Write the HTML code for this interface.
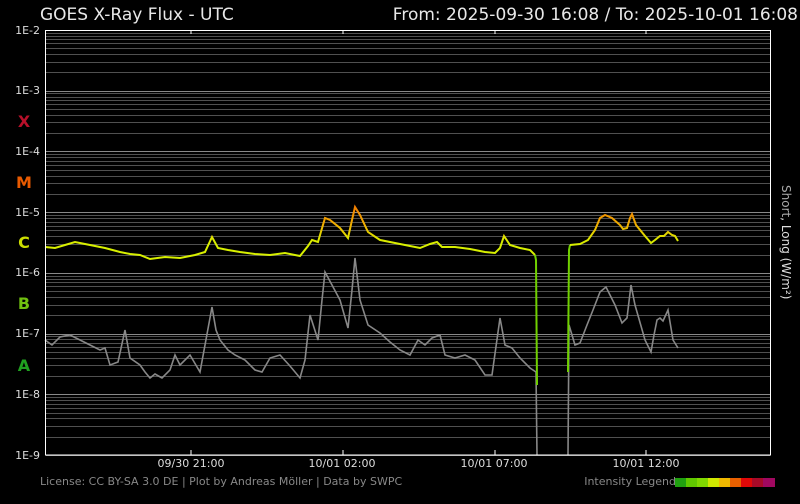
<!DOCTYPE html><html><head><style>body{margin:0;background:#000;width:800px;height:500px;overflow:hidden;font-family:"DejaVu Sans","Liberation Sans",sans-serif}</style></head><body>
<svg width="800" height="500" xmlns="http://www.w3.org/2000/svg">
<defs><linearGradient id="g" gradientUnits="userSpaceOnUse" x1="0" y1="205" x2="0" y2="245"><stop offset="0" stop-color="#f07800"/><stop offset="0.5" stop-color="#f0b000"/><stop offset="0.85" stop-color="#dce800"/><stop offset="1" stop-color="#d8f000"/></linearGradient></defs>
<g id="grid" stroke="#555" stroke-width="1"></g>
<text x="40" y="20" fill="#e8e8e8" font-size="17">GOES X-Ray Flux - UTC</text>
<text x="798" y="20" fill="#e8e8e8" font-size="17" text-anchor="end">From: 2025-09-30 16:08  /  To: 2025-10-01 16:08</text>
<g fill="#ddd" font-size="11" text-anchor="end">
<text x="40" y="34">1E-2</text><text x="40" y="94">1E-3</text><text x="40" y="155">1E-4</text><text x="40" y="216">1E-5</text><text x="40" y="276">1E-6</text><text x="40" y="337">1E-7</text><text x="40" y="398">1E-8</text><text x="40" y="459">1E-9</text></g>
<g font-size="16" font-weight="bold" text-anchor="middle">
<text x="24" y="127" fill="#b8102a">X</text><text x="24" y="188" fill="#e85a00">M</text><text x="24" y="248" fill="#ccdd00">C</text><text x="24" y="309" fill="#70c010">B</text><text x="24" y="371" fill="#20a020">A</text></g>
<g fill="#ddd" font-size="11" text-anchor="middle">
<text x="191" y="467">09/30 21:00</text><text x="342" y="467">10/01 02:00</text><text x="494" y="467">10/01 07:00</text><text x="646" y="467">10/01 12:00</text></g>
<g stroke="#fff"><line x1="191" y1="30" x2="191" y2="34"/><line x1="343" y1="30" x2="343" y2="34"/><line x1="495" y1="30" x2="495" y2="34"/><line x1="646" y1="30" x2="646" y2="34"/>
<line x1="191" y1="455" x2="191" y2="450"/><line x1="343" y1="455" x2="343" y2="450"/><line x1="495" y1="455" x2="495" y2="450"/><line x1="646" y1="455" x2="646" y2="450"/></g>
<text transform="translate(782,185) rotate(90)" fill="#aaa" font-size="12">Short<tspan fill="#ddd">, Long (W/m²)</tspan></text>
<text x="40" y="485" fill="#888" font-size="11">License: CC BY-SA 3.0 DE | Plot by Andreas Möller | Data by SWPC</text>
<text x="676" y="485" fill="#888" font-size="11" text-anchor="end">Intensity Legend</text>
<g><rect x="675" y="478" width="11" height="9" fill="#20a010"/><rect x="686" y="478" width="11" height="9" fill="#60c800"/><rect x="697" y="478" width="11" height="9" fill="#80d800"/><rect x="708" y="478" width="11" height="9" fill="#d0e800"/><rect x="719" y="478" width="11" height="9" fill="#f0b800"/><rect x="730" y="478" width="11" height="9" fill="#e86000"/><rect x="741" y="478" width="11" height="9" fill="#e00808"/><rect x="752" y="478" width="11" height="9" fill="#a80a28"/><rect x="763" y="478" width="12" height="9" fill="#a00860"/></g>
<polyline fill="none" stroke="#888" stroke-width="1.6" points="45,340 52,345 60,337 70,335 80,340 90,345 100,350 105,348 110,365 118,362 125,330 130,358 140,365 145,372 150,378 155,374 162,378 170,370 175,355 180,365 190,355 200,372 205,345 212,307 216,330 220,340 228,350 235,355 245,360 255,370 262,372 270,358 280,355 290,366 300,378 305,360 310,315 318,340 322,300 325,272 332,285 340,300 348,328 352,290 355,258 360,300 368,325 380,333 390,342 400,350 410,355 418,340 425,345 432,338 440,335 445,355 455,358 465,355 475,360 485,375 492,375 500,318 505,345 512,348 520,358 530,368 536,372 537,455"/>
<polyline fill="none" stroke="#888" stroke-width="1.6" points="568,455 569,325 575,345 580,343 587,325 593,310 600,292 606,287 615,305 622,323 627,318 631,285 635,305 645,340 651,352 654,335 657,320 660,318 663,321 668,310 673,340 678,348"/>
<polyline fill="none" stroke="url(#g)" stroke-width="2" points="45,247 55,248 65,245 75,242 85,244 95,246 105,248 120,252 130,254 140,255 150,259 165,257 180,258 195,255 205,252 212,237 218,248 228,250 240,252 255,254 270,255 285,253 300,256 308,246 312,240 318,242 325,218 330,220 340,228 348,238 352,220 355,207 360,215 368,232 380,240 395,243 410,246 420,248 430,244 437,242 442,247 455,247 470,249 485,252 495,253 500,248 504,236 510,245 520,248 530,250 535,255"/>
<polyline fill="none" stroke="#70d000" stroke-width="2" points="535,255 536,260 537,385"/>
<polyline fill="none" stroke="#70d000" stroke-width="2" points="568,372 569,250 570,245"/>
<polyline fill="none" stroke="url(#g)" stroke-width="2" points="570,245 580,244 588,240 595,230 600,218 605,215 612,218 620,225 623,229 627,228 630,218 632,214 636,225 645,236 651,243 655,240 660,236 664,236 668,232 672,235 675,236 678,241"/>
<rect x="45.5" y="30.5" width="725" height="424.5" fill="none" stroke="#fff" stroke-width="1"/>
</svg>
<script>
var g=document.getElementById('grid'),s='';
var h=(455-30)/7;
for(var d=0;d<7;d++){for(var k=1;k<10;k++){var y=455-(d+Math.log10(k))*h;y=Math.round(y)+0.5;s+='<line x1="46" x2="770" y1="'+y+'" y2="'+y+'" stroke="'+(k==1?'#888':'#505050')+'"/>';}}
g.innerHTML=s;
</script>
</body></html>
